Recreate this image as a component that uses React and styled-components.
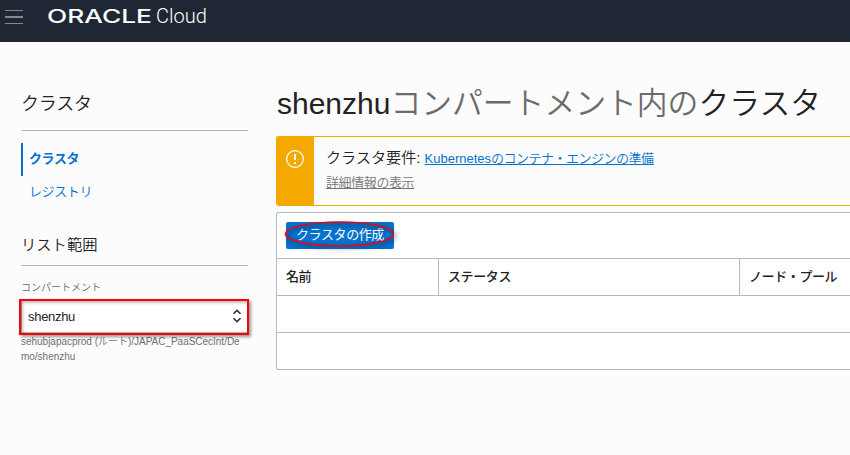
import React from 'react';
import styled, { createGlobalStyle } from 'styled-components';

const GlobalStyle = createGlobalStyle`
  * { box-sizing: border-box; }
  html, body { height: 100%; margin: 0; overflow: hidden; }
  body {
    background: #fcfcfc;
    color: #222;
    font-family: "Liberation Sans", "Noto Sans CJK JP", sans-serif;
  }
  h1, h2, p { margin: 0; font-weight: 400; }
`;

/* Japanese text run with its own size, tracking and weight */
const Ja = styled.span`
  font-family: "Noto Sans CJK JP", sans-serif;
  font-size: ${(p) => p.$size}px;
  letter-spacing: ${(p) => p.$track || 0}px;
  font-weight: ${(p) => p.$weight || 350};
`;

const Header = styled.header`
  height: 42px;
  background: #1e2733;
  display: flex;
  align-items: flex-start;
`;

const MenuButton = styled.button`
  display: flex;
  flex-direction: column;
  justify-content: space-between;
  width: 18px;
  height: 14px;
  margin: 10px 0 0 5px;
  padding: 0;
  border: 0;
  background: none;
`;

const MenuBar = styled.span`
  height: ${(p) => p.$h}px;
  background: #858789;
`;

const Brand = styled.svg`
  display: block;
  margin-left: 23px;
`;

const Layout = styled.div`
  display: grid;
  grid-template-columns: 227px 1fr;
  column-gap: 28px;
  padding-left: 21px;
`;

const Sidebar = styled.aside`
  display: flex;
  flex-direction: column;
`;

const SideTitle = styled.h2`
  height: ${(p) => p.$height}px;
  margin-top: ${(p) => p.$top}px;
  border-bottom: 1px solid ${(p) => p.$line};
  line-height: 24px;
`;

const Nav = styled.nav`
  margin-top: 12px;
  display: flex;
  flex-direction: column;
`;

const NavItem = styled.a`
  height: 33px;
  padding-left: 6px;
  border-left: 2px solid ${(p) => (p.$active ? '#0572ce' : 'transparent')};
  color: #0572ce;
  line-height: 29px;
`;

const Label = styled.label`
  height: 20px;
  margin-top: 13px;
  color: #666;
  line-height: 14px;
`;

const Select = styled.div`
  position: relative;
  height: 34px;
  display: flex;
  align-items: center;
  justify-content: space-between;
  padding: 0 5px 0 6px;
  border: 1px solid #aeb6c0;
  background: #fff;
  font-size: 13px;
  letter-spacing: -0.3px;
`;

const SelectMark = styled.span`
  position: absolute;
  inset: -1px -2px -3px -3px;
  border: 2px solid #f00;
  box-shadow: 2px 2px 3px rgba(0, 0, 0, 0.4), inset 2px 2px 3px rgba(0, 0, 0, 0.25);
`;

const Path = styled.p`
  color: #707070;
  font-size: 10px;
  letter-spacing: -0.02px;
  line-height: 15px;
  white-space: nowrap;
`;

const Main = styled.main`
  min-width: 0;
`;

const Title = styled.h1`
  height: 94px;
  padding: 35px 0 0 1px;
  font-size: 30px;
  line-height: 48px;
  white-space: nowrap;
`;

const Context = styled.span`
  color: #6b6b6b;
`;

const Alert = styled.section`
  display: flex;
  height: 70px;
  border: 1px solid #f5a800;
  border-right: 0;
  border-radius: 3px 0 0 3px;
  overflow: hidden;
`;

const AlertIcon = styled.div`
  width: 37px;
  background: #f5a800;
  display: flex;
  justify-content: center;
  padding: 13px 2px 0 0;
`;

const AlertBody = styled.div`
  padding: 7px 0 0 12px;
`;

const AlertLine = styled.p`
  height: 25px;
  line-height: 25px;
  white-space: nowrap;
  font-size: 15px;
`;

const Link = styled.a`
  color: ${(p) => (p.$muted ? '#757575' : '#0572ce')};
  font-size: 13px;
  text-decoration: underline;
  text-decoration-skip-ink: none;
  text-decoration-thickness: 1px;
  text-underline-offset: 1px;
`;

const Panel = styled.section`
  margin-top: 6px;
  border: 1px solid #b4bac2;
  border-right: 0;
  border-radius: 3px 0 0 3px;
  background: #fff;
`;

const Toolbar = styled.div`
  height: 45px;
  padding: 9px 0 0 9px;
`;

const Button = styled.button`
  position: relative;
  display: flex;
  align-items: center;
  justify-content: center;
  width: 108px;
  height: 27px;
  padding: 0 0 4px;
  border: 0;
  border-radius: 2px;
  background: #0572ce;
  color: #fff;
  white-space: nowrap;
`;

const ButtonMark = styled.svg`
  position: absolute;
  left: -3px;
  top: -2px;
  overflow: visible;
  filter: drop-shadow(2px 2px 2px rgba(0, 0, 0, 0.5));
`;

const Row = styled.div`
  display: grid;
  grid-template-columns: 162px 301px 1fr;
  height: 37px;
  border-top: 1px solid #b4bac2;
`;

const HeadCell = styled.div`
  padding-left: 9px;
  border-right: ${(p) => (p.$last ? 0 : 1)}px solid #b4bac2;
  line-height: 33px;
`;

const columns = ['名前', 'ステータス', 'ノード・プール'];

export default function App() {
  return (
    <>
      <GlobalStyle />
      <Header>
        <MenuButton aria-label="Menu">
          <MenuBar $h={1} />
          <MenuBar $h={2} />
          <MenuBar $h={1} />
        </MenuButton>
        <Brand width="164" height="34" fill="#fff">
          <text x="1" y="23" fontFamily="Inter" fontWeight="500" fontSize="18" textLength="105" lengthAdjust="spacingAndGlyphs">ORACLE</text>
          <text x="110" y="23" fontFamily="Roboto" fontWeight="300" fontSize="19.5" textLength="51" lengthAdjust="spacingAndGlyphs">Cloud</text>
        </Brand>
      </Header>
      <Layout>
        <Sidebar>
          <SideTitle $top={48} $height={41} $line="#acb6c2">
            <Ja $size={18} $track={-0.2}>クラスタ</Ja>
          </SideTitle>
          <Nav>
            <NavItem $active><Ja $size={13} $track={-0.4} $weight={700}>クラスタ</Ja></NavItem>
            <NavItem><Ja $size={13} $track={-0.4}>レジストリ</Ja></NavItem>
          </Nav>
          <SideTitle $top={21} $height={36} $line="#b4b7bb">
            <Ja $size={15.3}>リスト範囲</Ja>
          </SideTitle>
          <Label><Ja $size={10}>コンパートメント</Ja></Label>
          <Select>
            shenzhu
            <svg width="10" height="14" viewBox="0 0 10 14" fill="none" stroke="#333" strokeWidth="1.6">
              <path d="M1.5 4.8 5 1.4l3.5 3.4M1.5 9.2 5 12.6l3.5-3.4" />
            </svg>
            <SelectMark />
          </Select>
          <Path>
            sehubjapacprod (<Ja $size={10}>ルート</Ja>)/JAPAC_PaaSCecInt/De<br />mo/shenzhu
          </Path>
        </Sidebar>
        <Main>
          <Title>
            shenzhu<Context><Ja $size={30.8}>コンパートメント内の</Ja></Context><Ja $size={30.8}>クラスタ</Ja>
          </Title>
          <Alert>
            <AlertIcon>
              <svg width="18" height="18" viewBox="0 0 18 18" fill="none" stroke="#fff">
                <circle cx="9" cy="9" r="8.3" strokeWidth="1.3" />
                <path d="M9 4v6M9 12v2" strokeWidth="2" />
              </svg>
            </AlertIcon>
            <AlertBody>
              <AlertLine>
                <Ja $size={15.1}>クラスタ要件</Ja>:{' '}
                <Link>Kubernetes<Ja $size={13} $track={-0.5}>のコンテナ・エンジンの準備</Ja></Link>
              </AlertLine>
              <AlertLine><Link $muted><Ja $size={13} $track={-0.4}>詳細情報の表示</Ja></Link></AlertLine>
            </AlertBody>
          </Alert>
          <Panel>
            <Toolbar>
              <Button>
                <Ja $size={13} $track={-0.4} $weight={400}>クラスタの作成</Ja>
                <ButtonMark width="112" height="27">
                  <ellipse cx="56.5" cy="14" rx="54" ry="12" fill="none" stroke="#f00011" strokeWidth="1.6" />
                </ButtonMark>
              </Button>
            </Toolbar>
            <Row>
              {columns.map((c, i) => (
                <HeadCell key={c} $last={i === columns.length - 1}>
                  <Ja $size={13} $track={-0.4} $weight={500}>{c}</Ja>
                </HeadCell>
              ))}
            </Row>
            <Row />
            <Row />
          </Panel>
        </Main>
      </Layout>
    </>
  );
}
